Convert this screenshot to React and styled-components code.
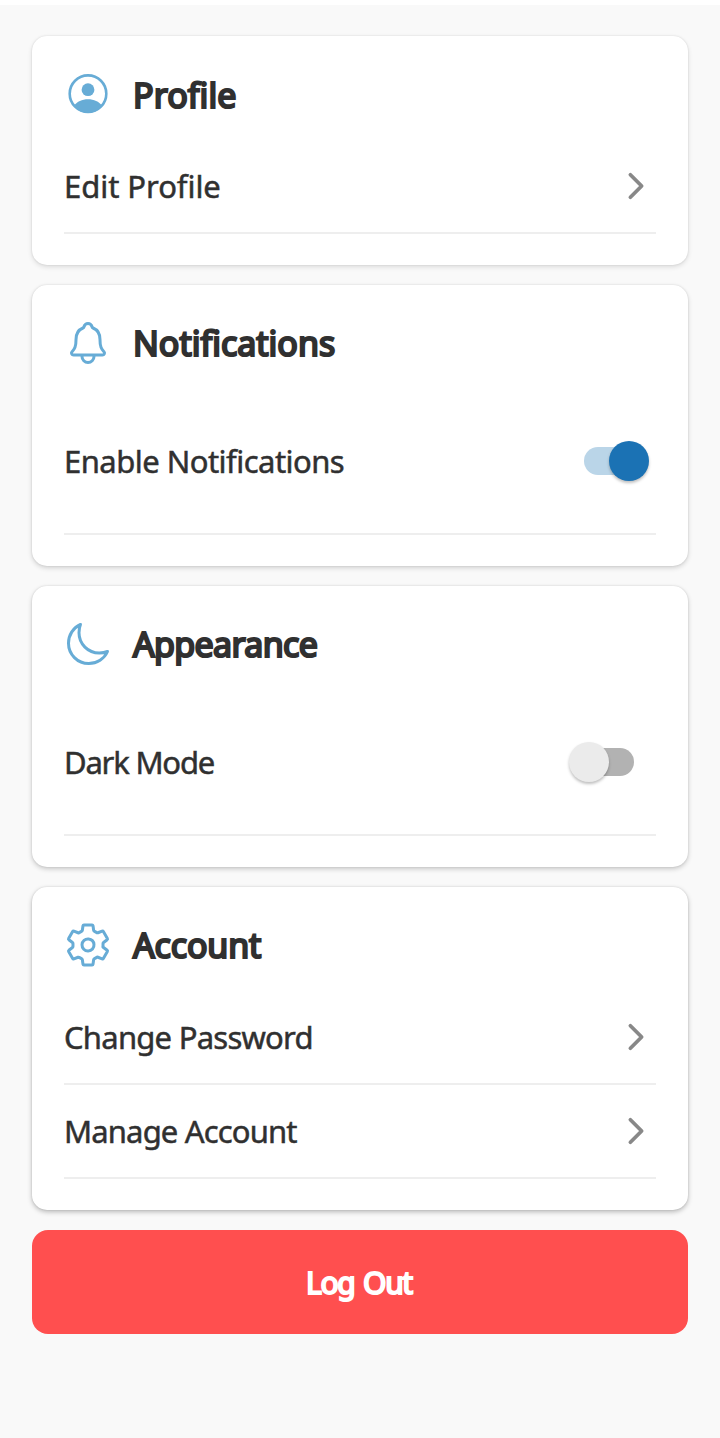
import React, { useState } from "react";
import styled, { createGlobalStyle } from "styled-components";
import {
  IoNotificationsOutline,
  IoMoonOutline,
  IoSettingsOutline,
  IoChevronForward,
} from "react-icons/io5";

const GlobalStyle = createGlobalStyle`
  * { box-sizing: border-box; }
  body {
    margin: 0;
    background: #f9f9f9;
    font-family: "Noto Sans", "Open Sans", sans-serif;
    color: #303030;
  }
`;

const Screen = styled.main`
  min-height: 1438px;
  padding: 31px 32px 0;
  border-top: 5px solid #ffffff;
  background: #f9f9f9;
`;

const Card = styled.section`
  height: ${(p) => p.$height}px;
  margin-bottom: ${(p) => p.$gap}px;
  padding: 32px;
  border-radius: 15px;
  background: #ffffff;
  box-shadow: 0 2px 5px rgba(0, 0, 0, ${(p) => p.$shade}), 0 0 2px rgba(0, 0, 0, 0.12);
`;

const CardHeader = styled.header`
  display: flex;
  align-items: center;
  gap: 20px;
  height: 52px;
  margin-bottom: 20px;

  > svg {
    flex: none;
    width: 48px;
    height: 48px;
    color: #67acd6;
  }
`;

const Title = styled.h2`
  margin: 0;
  padding: 1px 0 0 1px;
  font-size: 34px;
  font-weight: 400;
  line-height: 52px;
  letter-spacing: ${(p) => p.$spacing}px;
  white-space: nowrap;
  -webkit-text-stroke: 2.2px currentColor;
`;

const Row = styled.div`
  display: flex;
  align-items: center;
  justify-content: space-between;
  height: ${(p) => p.$height}px;
  border-bottom: 2px solid #eeeeee;

  > svg {
    width: 40px;
    height: 40px;
    color: #888888;
  }
`;

const Label = styled.span`
  font-size: 31px;
  line-height: 44px;
  letter-spacing: ${(p) => p.$spacing}px;
  white-space: nowrap;
  -webkit-text-stroke: 0.5px currentColor;
`;

const Track = styled.button`
  display: flex;
  align-items: center;
  justify-content: ${(p) => (p.$on ? "flex-end" : "flex-start")};
  width: 54px;
  height: 28px;
  margin: 0 ${(p) => (p.$on ? 18 : 22)}px 0 0;
  padding: 0;
  border: 0;
  border-radius: 14px;
  background: ${(p) => (p.$on ? "#bad5e8" : "#b2b2b2")};
`;

const Knob = styled.span`
  flex: none;
  width: 40px;
  height: 40px;
  margin: 0 -11px;
  border-radius: 50%;
  background: ${(p) => (p.$on ? "#1b72b4" : "#ebebeb")};
  box-shadow: 0 2px 3px rgba(0, 0, 0, 0.25);
`;

const LogoutButton = styled.button`
  display: block;
  width: 100%;
  height: 104px;
  padding: 2px 2px 0 0;
  border: 0;
  border-radius: 16px;
  background: #ff4f4f;
  color: #ffffff;
  font-family: inherit;
  font-size: 30px;
  font-weight: 400;
  letter-spacing: -1.3px;
  word-spacing: 2px;
  -webkit-text-stroke: 2px currentColor;
`;

function PersonIcon() {
  return (
    <svg viewBox="0 0 48 48" fill="none">
      <circle cx="24" cy="23.7" r="18.3" stroke="currentColor" strokeWidth="2.6" />
      <circle cx="24" cy="19.7" r="6.4" fill="currentColor" />
      <path d="M10 35.700C13 31.700 18 29.300 24 29.300S35 31.700 38 35.700C34.500 40.700 29.500 42.700 24 42.700s-10.500-2-14-7Z" fill="currentColor" />
    </svg>
  );
}

function Toggle({ initial, label }) {
  const [on, setOn] = useState(initial);
  return (
    <Track $on={on} role="switch" aria-checked={on} aria-label={label} onClick={() => setOn(!on)}>
      <Knob $on={on} />
    </Track>
  );
}

export default function App() {
  return (
    <>
      <GlobalStyle />
      <Screen>
        <Card $height={229.4} $gap={19.6} $shade={0.12}>
          <CardHeader>
            <PersonIcon />
            <Title $spacing={0.1}>Profile</Title>
          </CardHeader>
          <Row $height={94}>
            <Label $spacing={-0.05}>Edit Profile</Label>
            <IoChevronForward />
          </Row>
        </Card>

        <Card $height={281.5} $gap={19.5} $shade={0.16}>
          <CardHeader>
            <IoNotificationsOutline />
            <Title $spacing={0}>Notifications</Title>
          </CardHeader>
          <Row $height={146}>
            <Label $spacing={-0.53}>Enable Notifications</Label>
            <Toggle initial={true} label="Enable Notifications" />
          </Row>
        </Card>

        <Card $height={281.5} $gap={19.5} $shade={0.2}>
          <CardHeader>
            <IoMoonOutline />
            <Title $spacing={-0.65}>Appearance</Title>
          </CardHeader>
          <Row $height={146}>
            <Label $spacing={-1.2}>Dark Mode</Label>
            <Toggle initial={false} label="Dark Mode" />
          </Row>
        </Card>

        <Card $height={323.5} $gap={19.4} $shade={0.26}>
          <CardHeader>
            <IoSettingsOutline />
            <Title $spacing={-0.15}>Account</Title>
          </CardHeader>
          <Row $height={94}>
            <Label $spacing={-0.75}>Change Password</Label>
            <IoChevronForward />
          </Row>
          <Row $height={94}>
            <Label $spacing={-0.85}>Manage Account</Label>
            <IoChevronForward />
          </Row>
        </Card>

        <LogoutButton>Log Out</LogoutButton>
      </Screen>
    </>
  );
}
